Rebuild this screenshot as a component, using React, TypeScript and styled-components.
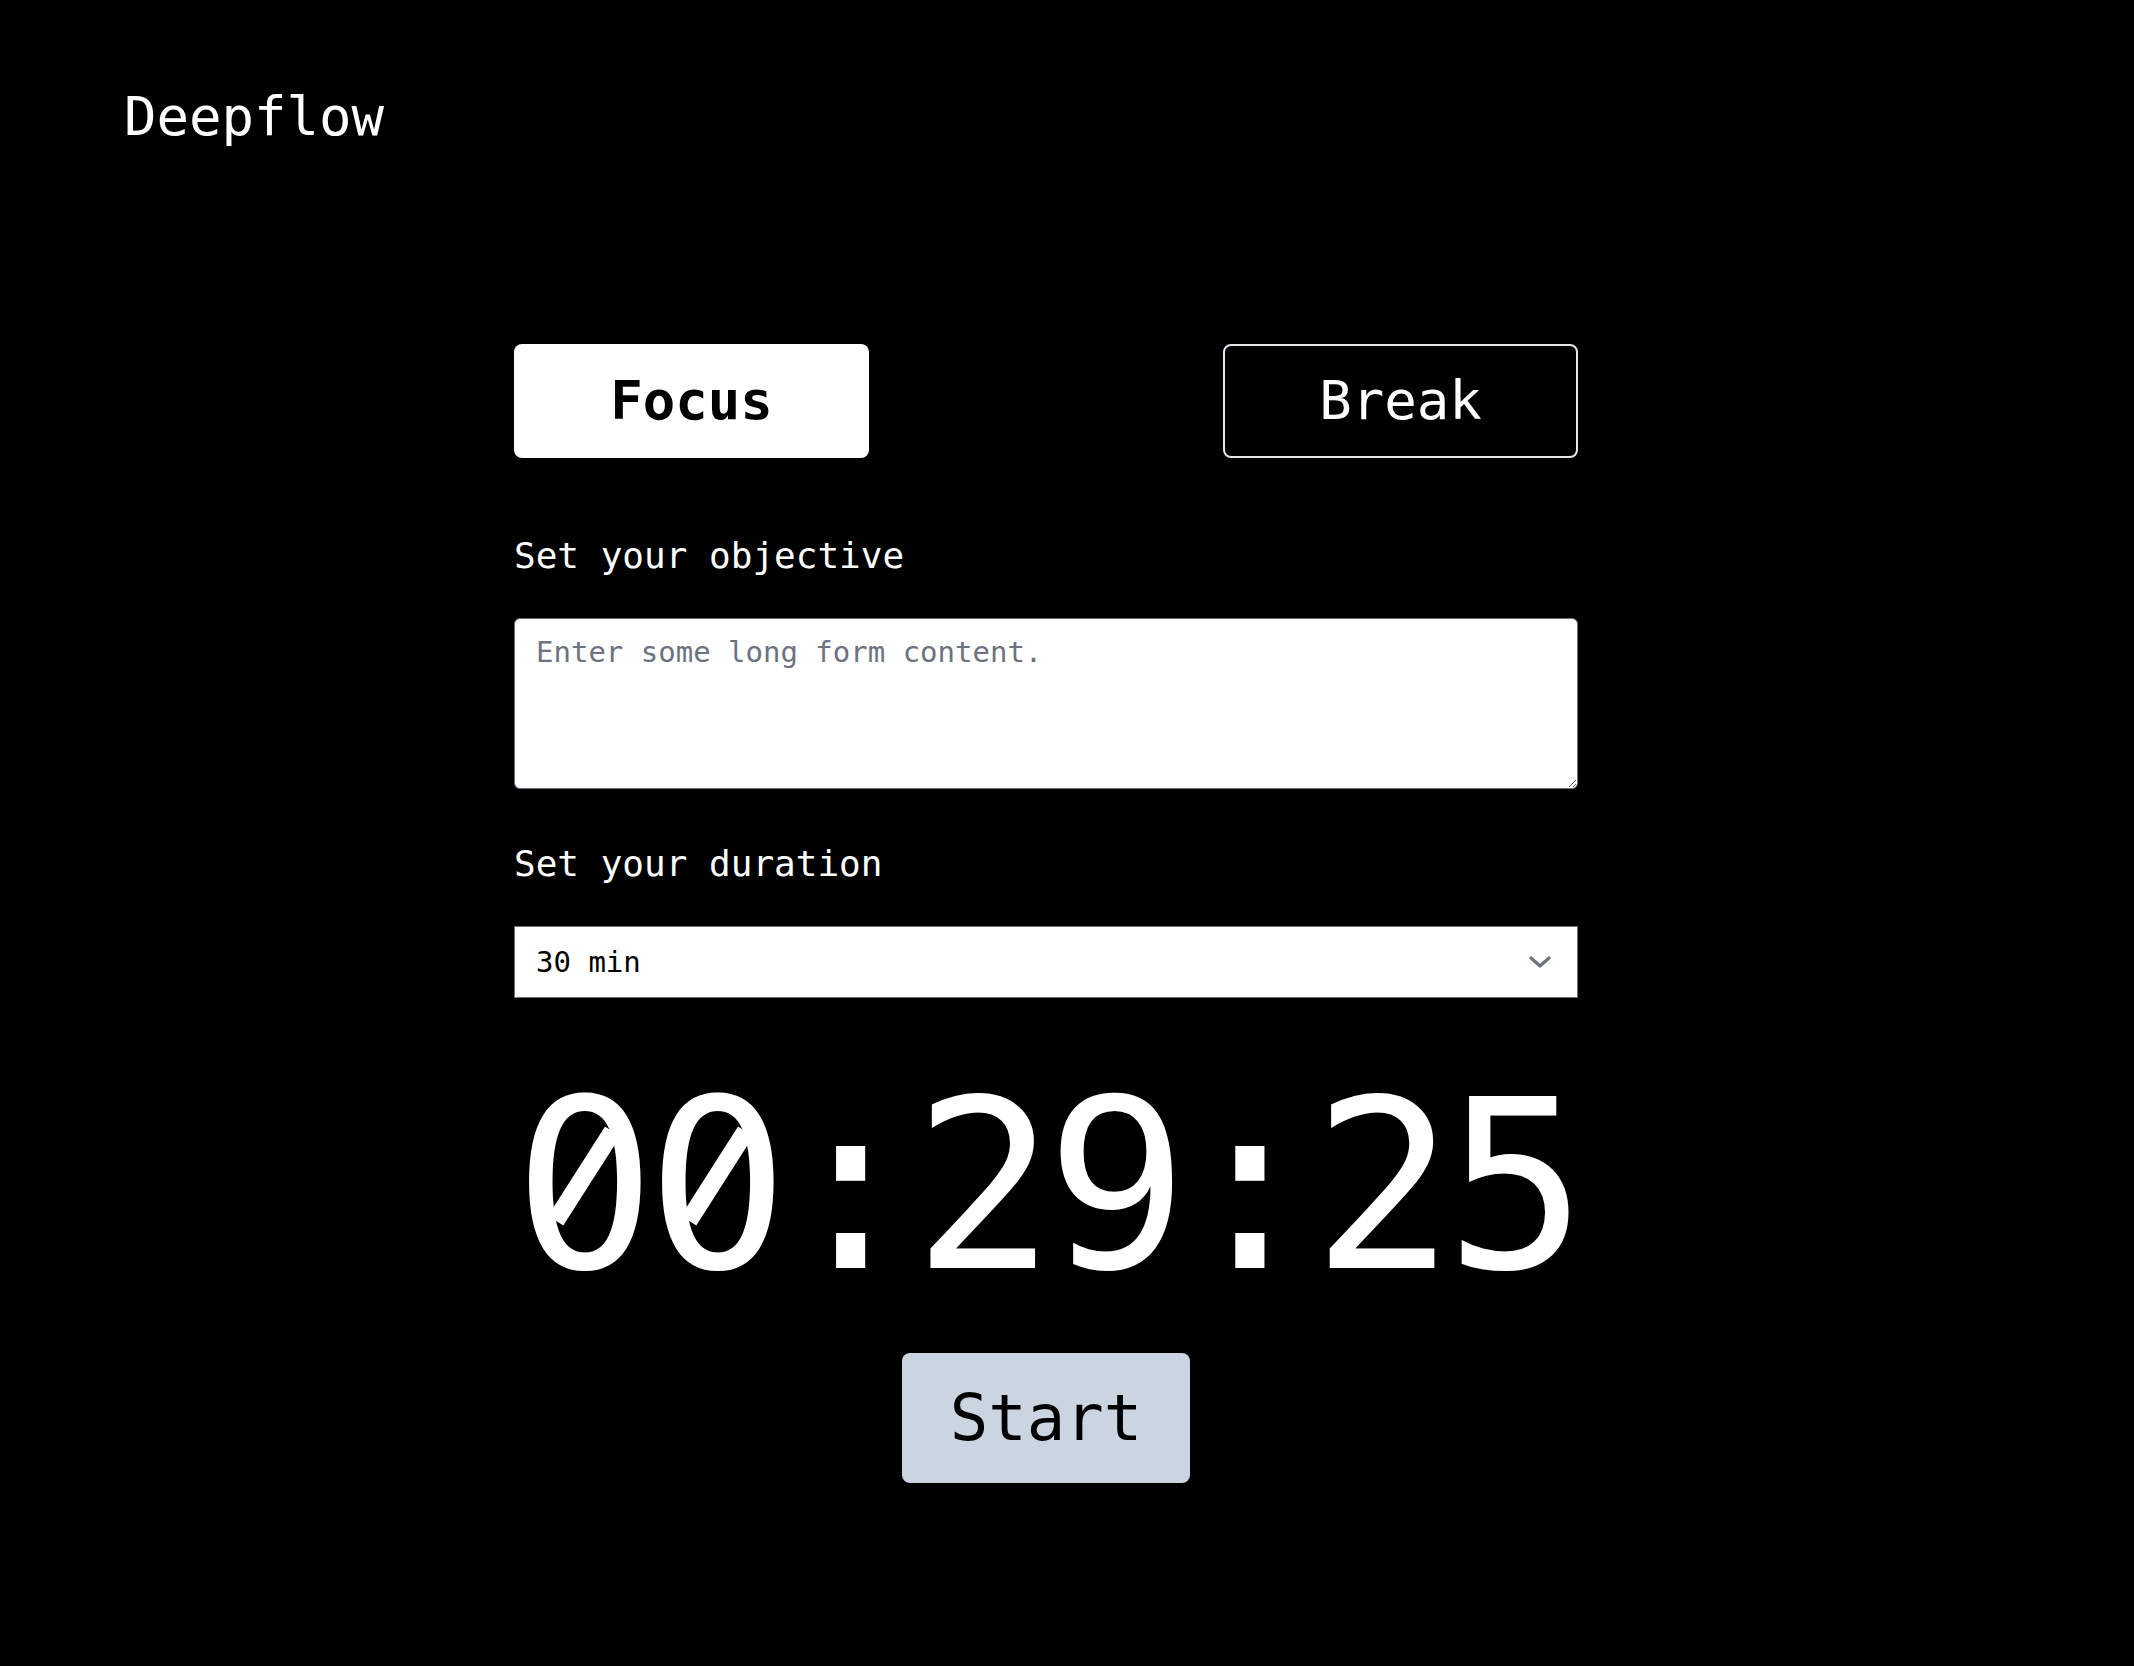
import React, { useState } from "react";
import styled, { createGlobalStyle } from "styled-components";

const GlobalStyle = createGlobalStyle`
  html, body {
    margin: 0;
    padding: 0;
    background: #000;
    color: #fff;
    font-family: "DejaVu Sans Mono", "Liberation Mono", monospace;
  }
  * { box-sizing: border-box; }
`;

const Page = styled.div`
  min-height: 1666px;
  background: #000;
  display: flex;
  flex-direction: column;
`;

const Header = styled.header`
  padding: 90px 0 0 124px;
`;

const Logo = styled.h1`
  margin: 0;
  font-size: 54px;
  line-height: 1;
  font-weight: 400;
  color: #fff;
`;

const Main = styled.main`
  width: 1064px;
  margin: 200px 0 0 514px;
  display: flex;
  flex-direction: column;
`;

const ModeRow = styled.div`
  display: flex;
  justify-content: space-between;
`;

const ModeButton = styled.button<{ $active?: boolean }>`
  width: 355px;
  height: 114px;
  border-radius: 8px;
  font-family: inherit;
  font-size: 54px;
  line-height: 1;
  display: flex;
  align-items: center;
  justify-content: center;
  cursor: pointer;
  background: ${(p) => (p.$active ? "#fff" : "#000")};
  color: ${(p) => (p.$active ? "#000" : "#fff")};
  font-weight: ${(p) => (p.$active ? 700 : 400)};
  border: ${(p) => (p.$active ? "none" : "2px solid #e5e7eb")};
  padding: 0;
`;

const Label = styled.label<{ $top: number }>`
  display: block;
  margin-top: ${(p) => p.$top}px;
  font-size: 36px;
  line-height: 1;
  color: #fff;
`;

const TextArea = styled.textarea`
  display: block;
  margin-top: 44px;
  width: 100%;
  height: 171px;
  border: 1px solid #6b7280;
  border-radius: 6px;
  background: #fff;
  color: #000;
  font-family: inherit;
  font-size: 29px;
  line-height: 45px;
  padding: 11px 21px;
  outline: none;
  &::placeholder {
    color: #6b7280;
  }
`;

const SelectWrap = styled.div`
  position: relative;
  margin-top: 44px;
  width: 100%;
  height: 72px;
`;

const Select = styled.select`
  appearance: none;
  -webkit-appearance: none;
  width: 100%;
  height: 72px;
  border: 1px solid #6b7280;
  border-radius: 0;
  background: #fff;
  color: #000;
  font-family: inherit;
  font-size: 29px;
  padding: 0 60px 0 21px;
  outline: none;
`;

const Chevron = styled.svg`
  position: absolute;
  right: 27px;
  top: 50%;
  width: 22px;
  height: 13px;
  transform: translateY(-50%);
  pointer-events: none;
`;

const Timer = styled.div`
  margin-top: 71px;
  font-size: 236px;
  line-height: 1;
  letter-spacing: -9px;
  text-align: center;
  white-space: nowrap;
  color: #fff;
  margin-left: -4px;
  margin-right: -4px;
`;

/* Slashed zero, as in the reference's monospace face */
const Zero = styled.span`
  position: relative;
  &::before {
    content: "";
    position: absolute;
    left: 0.222em;
    top: 0.37em;
    width: 0.16em;
    height: 0.35em;
    border-radius: 50%;
    background: #000;
  }
  &::after {
    content: "";
    position: absolute;
    left: 0.075em;
    top: 0.499em;
    width: 0.45em;
    height: 0.075em;
    background: #fff;
    transform: rotate(-57.5deg);
  }
`;

const StartButton = styled.button`
  align-self: center;
  margin-top: 48px;
  width: 288px;
  height: 130px;
  border: none;
  border-radius: 8px;
  background: #cbd5e1;
  color: #000;
  font-family: inherit;
  font-size: 64px;
  line-height: 1;
  cursor: pointer;
  padding: 0;
  display: flex;
  align-items: center;
  justify-content: center;
`;

function TimeText({ value }: { value: string }) {
  return (
    <>
      {value.split("").map((ch, i) =>
        ch === "0" ? <Zero key={i}>0</Zero> : <React.Fragment key={i}>{ch}</React.Fragment>
      )}
    </>
  );
}

export default function App() {
  const [mode, setMode] = useState<"focus" | "break">("focus");
  const [duration, setDuration] = useState("30");
  return (
    <Page>
      <GlobalStyle />
      <Header>
        <Logo>Deepflow</Logo>
      </Header>
      <Main>
        <ModeRow>
          <ModeButton $active={mode === "focus"} onClick={() => setMode("focus")}>
            Focus
          </ModeButton>
          <ModeButton $active={mode === "break"} onClick={() => setMode("break")}>
            Break
          </ModeButton>
        </ModeRow>
        <Label $top={80} htmlFor="objective">
          Set your objective
        </Label>
        <TextArea id="objective" placeholder="Enter some long form content." />
        <Label $top={57} htmlFor="duration">
          Set your duration
        </Label>
        <SelectWrap>
          <Select id="duration" value={duration} onChange={(e) => setDuration(e.target.value)}>
            <option value="15">15 min</option>
            <option value="30">30 min</option>
            <option value="45">45 min</option>
            <option value="60">60 min</option>
          </Select>
          <Chevron viewBox="0 0 22 13" fill="none">
            <path d="M2 2.5 L11 10.5 L20 2.5" stroke="#6b7280" strokeWidth="3.2" strokeLinecap="round" strokeLinejoin="round" />
          </Chevron>
        </SelectWrap>
        <Timer>
          <TimeText value="00:29:25" />
        </Timer>
        <StartButton>Start</StartButton>
      </Main>
    </Page>
  );
}
